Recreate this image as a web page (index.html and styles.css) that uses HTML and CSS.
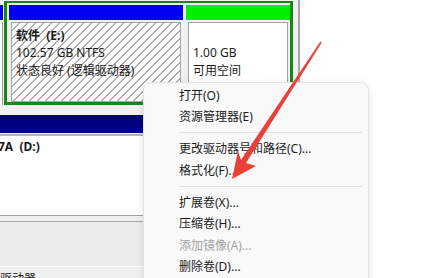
FILE: index.html
```html
<!DOCTYPE html>
<html lang="zh-CN">
<head>
<meta charset="utf-8">
<title>磁盘管理</title>
<link rel="stylesheet" href="styles.css">
</head>
<body>
<div class="screen">
  <div class="disks">
    <div class="row1">
      <div class="prev"><div class="prev-head"></div><div class="prev-body"></div></div>
      <div class="ext">
        <div class="part logical">
          <div class="head head-blue"></div>
          <div class="body hatch">
            <div class="line bold">软件  (E:)</div>
            <div class="line">102.57 GB NTFS</div>
            <div class="line">状态良好 (逻辑驱动器)</div>
          </div>
        </div>
        <div class="part free">
          <div class="head head-green"></div>
          <div class="body plain">
            <div class="line"> </div>
            <div class="line">1.00 GB</div>
            <div class="line">可用空间</div>
          </div>
        </div>
      </div>
    </div>
    <div class="row2">
      <div class="head-navy"></div>
      <div class="body2">
        <div class="line bold cut">7A  (D:)</div>
      </div>
      <div class="gap2"></div>
      <div class="body3">
        <div class="line">驱动器</div>
      </div>
    </div>
  </div>

  <div class="menu">
    <div class="item">打开(O)</div>
    <div class="item">资源管理器(E)</div>
    <div class="sep"></div>
    <div class="item">更改驱动器号和路径(C)...</div>
    <div class="item">格式化(F)...</div>
    <div class="sep"></div>
    <div class="item">扩展卷(X)...</div>
    <div class="item">压缩卷(H)...</div>
    <div class="item disabled">添加镜像(A)...</div>
    <div class="item">删除卷(D)...</div>
  </div>

  <svg class="arrow" width="423" height="278" viewBox="0 0 423 278" xmlns="http://www.w3.org/2000/svg">
    <polygon fill="#e8413a" points="232,179 256,166 246,163 321.8,42.5 320.4,41.6 241,160 238,151"/>
  </svg>
</div>
</body>
</html>
```
FILE: styles.css
```css
* {
  box-sizing: border-box;
  margin: 0;
  padding: 0;
}

html,
body {
  width: 423px;
  height: 278px;
  overflow: hidden;
  background: #ffffff;
}

body {
  font-family: "Noto Sans", "Noto Sans CJK SC", sans-serif;
  font-size: 12px;
  color: #1a1a1a;
}

.screen {
  position: relative;
  width: 423px;
  height: 278px;
  display: flex;
  overflow: hidden;
}

.disks {
  width: 300px;
  height: 278px;
  background: #f0f0f0;
  border-right: 2px solid #a9a9a9;
  display: flex;
  flex-direction: column;
  overflow: hidden;
}

/* ---------- row 1 ---------- */
.row1 {
  display: flex;
  height: 105px;
  padding-top: 1px;
  flex-shrink: 0;
}

.prev {
  width: 3px;
  padding-top: 4px;
  display: flex;
  flex-direction: column;
}

.prev-head {
  height: 15px;
  background: #0000f0;
}

.prev-body {
  flex: 1;
  margin-top: 2px;
  border-right: 1px solid #a0a0a0;
  background: #ffffff;
}

.ext {
  margin-left: 1px;
  width: 289px;
  border: 3px solid #18861a;
  border-top-width: 2px;
  padding: 2px 0 0 2px;
  display: flex;
  gap: 3px;
}

.part {
  display: flex;
  flex-direction: column;
}

.logical {
  width: 174px;
}

.free {
  flex: 1;
}

.head {
  height: 15px;
  flex-shrink: 0;
}

.head-blue {
  background: #0000f2;
}

.head-green {
  background: #00f000;
}

.body {
  flex: 1;
  margin: 2px 2px 0 2px;
  border: 1px solid #a4a4a4;
  padding: 3.5px 4px;
}

.hatch {
  background: repeating-linear-gradient(135deg, #ffffff 0 4.4px, #b0b0b0 4.4px 5.66px);
}

.plain {
  background: #ffffff;
}

.line {
  line-height: 17.5px;
  height: 17.5px;
  white-space: pre;
}

.bold {
  font-weight: 700;
}

/* ---------- row 2 ---------- */
.row2 {
  margin-top: 10px;
  display: flex;
  flex-direction: column;
  flex: 1;
}

.head-navy {
  height: 18px;
  background: #000080;
  flex-shrink: 0;
}

.body2 {
  margin-top: 1px;
  height: 82px;
  background: #ffffff;
  border-top: 2px solid #b4b4b4;
  border-bottom: 1px solid #a0a0a0;
  padding: 2px 0;
  flex-shrink: 0;
}

.cut {
  margin-left: -2px;
}

.gap2 {
  height: 51px;
  border-top: 5px solid #f0f0f0;
  border-bottom: 1px solid #ffffff;
  box-shadow: inset 0 1px 0 #a8a8a8;
  background: #ececec;
  flex-shrink: 0;
}

.body3 {
  flex: 1;
  background: #f0f0f0;
  padding-top: 3px;
}

/* ---------- context menu ---------- */
.menu {
  position: absolute;
  left: 143px;
  top: 82px;
  width: 226px;
  height: 204px;
  background: #f9f9f9;
  border: 1px solid #e2e2e2;
  border-radius: 8px;
  box-shadow: 0 2px 8px rgba(0, 0, 0, 0.10);
  padding-top: 1.5px;
  font-family: "Noto Sans", "Noto Sans CJK SC", sans-serif;
  font-size: 12px;
  color: #1b1b1b;
}

.item {
  height: 21.5px;
  line-height: 21.5px;
  padding-left: 35px;
  white-space: nowrap;
}

.item.disabled {
  color: #a3a3a3;
}

.sep {
  height: 1px;
  background: #e1e1e1;
  margin: 4.75px 6px 4.75px 35px;
}

/* ---------- annotation arrow ---------- */
.arrow {
  position: absolute;
  left: 0;
  top: 0;
  pointer-events: none;
}
```
